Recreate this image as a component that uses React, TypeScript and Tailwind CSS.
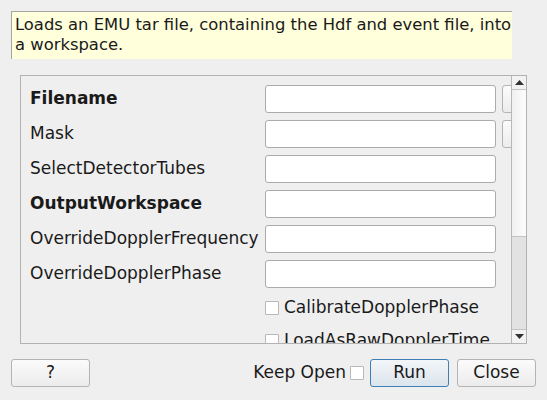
import React from 'react';

type Row = { label: string; bold?: boolean; browse?: boolean };

const rows: Row[] = [
  { label: 'Filename', bold: true, browse: true },
  { label: 'Mask', browse: true },
  { label: 'SelectDetectorTubes' },
  { label: 'OutputWorkspace', bold: true },
  { label: 'OverrideDopplerFrequency' },
  { label: 'OverrideDopplerPhase' },
];

const checks = ['CalibrateDopplerPhase', 'LoadAsRawDopplerTime'];

const Button = ({ children, primary }: { children: React.ReactNode; primary?: boolean }) => (
  <button
    className={
      primary
        ? 'w-[79px] h-[28px] rounded-[3px] border border-[#3f7fb7] bg-gradient-to-b from-[#f3f6f9] to-[#dbe4ec] text-[#1a1a1a]'
        : 'w-[79px] h-[28px] rounded-[3px] border border-[#b4b4b4] bg-gradient-to-b from-[#fbfbfb] to-[#ececec] text-[#1a1a1a]'
    }
  >
    {children}
  </button>
);

export default function App() {
  return (
    <div className="w-[547px] h-[400px] bg-[#efefef] text-[17px] text-[#1a1a1a] font-['DejaVu_Sans',sans-serif] overflow-hidden flex flex-col">
      <div className="ml-[11px] mt-[11px] w-[501px] h-[48px] bg-[#ffffdc] border-t border-l border-[#a5a5a5] pl-[3px] pt-[3px] text-[16.4px] leading-[20px] whitespace-nowrap">
        Loads an EMU tar file, containing the Hdf and event file, into
        <br />
        a workspace.
      </div>

      <div className="ml-[20px] mt-[16px] w-[507px] h-[269px] border border-[#b2b2b2] flex">
        <div className="flex-1 min-w-0 overflow-hidden pl-[9px] pt-[9px] flex flex-col gap-[7px]">
          {rows.map((r) => (
            <div key={r.label} className="h-[28px] flex items-center shrink-0">
              <div className={`w-[235px] shrink-0 whitespace-nowrap ${r.bold ? 'font-bold' : ''}`}>{r.label}</div>
              <div className="w-[231px] h-[28px] bg-white border border-[#ababab] rounded-[3px] shrink-0" />
              {r.browse && (
                <div className="ml-[6px] w-[20px] h-[28px] rounded-[3px] border border-[#b4b4b4] bg-gradient-to-b from-[#fbfbfb] to-[#ececec] shrink-0" />
              )}
            </div>
          ))}
          {checks.map((c) => (
            <div key={c} className="h-[26px] flex items-center shrink-0 pl-[235px] whitespace-nowrap">
              <div className="w-[14px] h-[14px] bg-white border border-[#b9b9b9] rounded-[1px] shrink-0" />
              <span className="ml-[5px]">{c}</span>
            </div>
          ))}
        </div>
        <div className="w-[15px] shrink-0 border-l border-[#b8b8b8] flex flex-col">
          <div className="h-[14px] border-b border-[#c4c4c4] bg-[#f2f2f2] flex items-center justify-center">
            <svg width="9" height="5" viewBox="0 0 9 5">
              <path d="M0 5 L4.5 0 L9 5 Z" fill="#303030" />
            </svg>
          </div>
          <div className="h-[147px] bg-gradient-to-r from-[#f0f0f0] to-[#fdfdfd] border-b border-[#c4c4c4]" />
          <div className="flex-1 bg-[#e2e2e2]" />
          <div className="h-[14px] border-t border-[#c4c4c4] bg-[#f2f2f2] flex items-center justify-center">
            <svg width="9" height="5" viewBox="0 0 9 5">
              <path d="M0 0 L9 0 L4.5 5 Z" fill="#303030" />
            </svg>
          </div>
        </div>
      </div>

      <div className="mt-[15px] px-[11px] flex items-center">
        <Button>?</Button>
        <div className="flex-1" />
        <span>Keep Open</span>
        <div className="ml-[4px] w-[14px] h-[14px] bg-white border border-[#b9b9b9] rounded-[1px]" />
        <div className="ml-[6px]">
          <Button primary>Run</Button>
        </div>
        <div className="ml-[8px]">
          <Button>Close</Button>
        </div>
      </div>
    </div>
  );
}
